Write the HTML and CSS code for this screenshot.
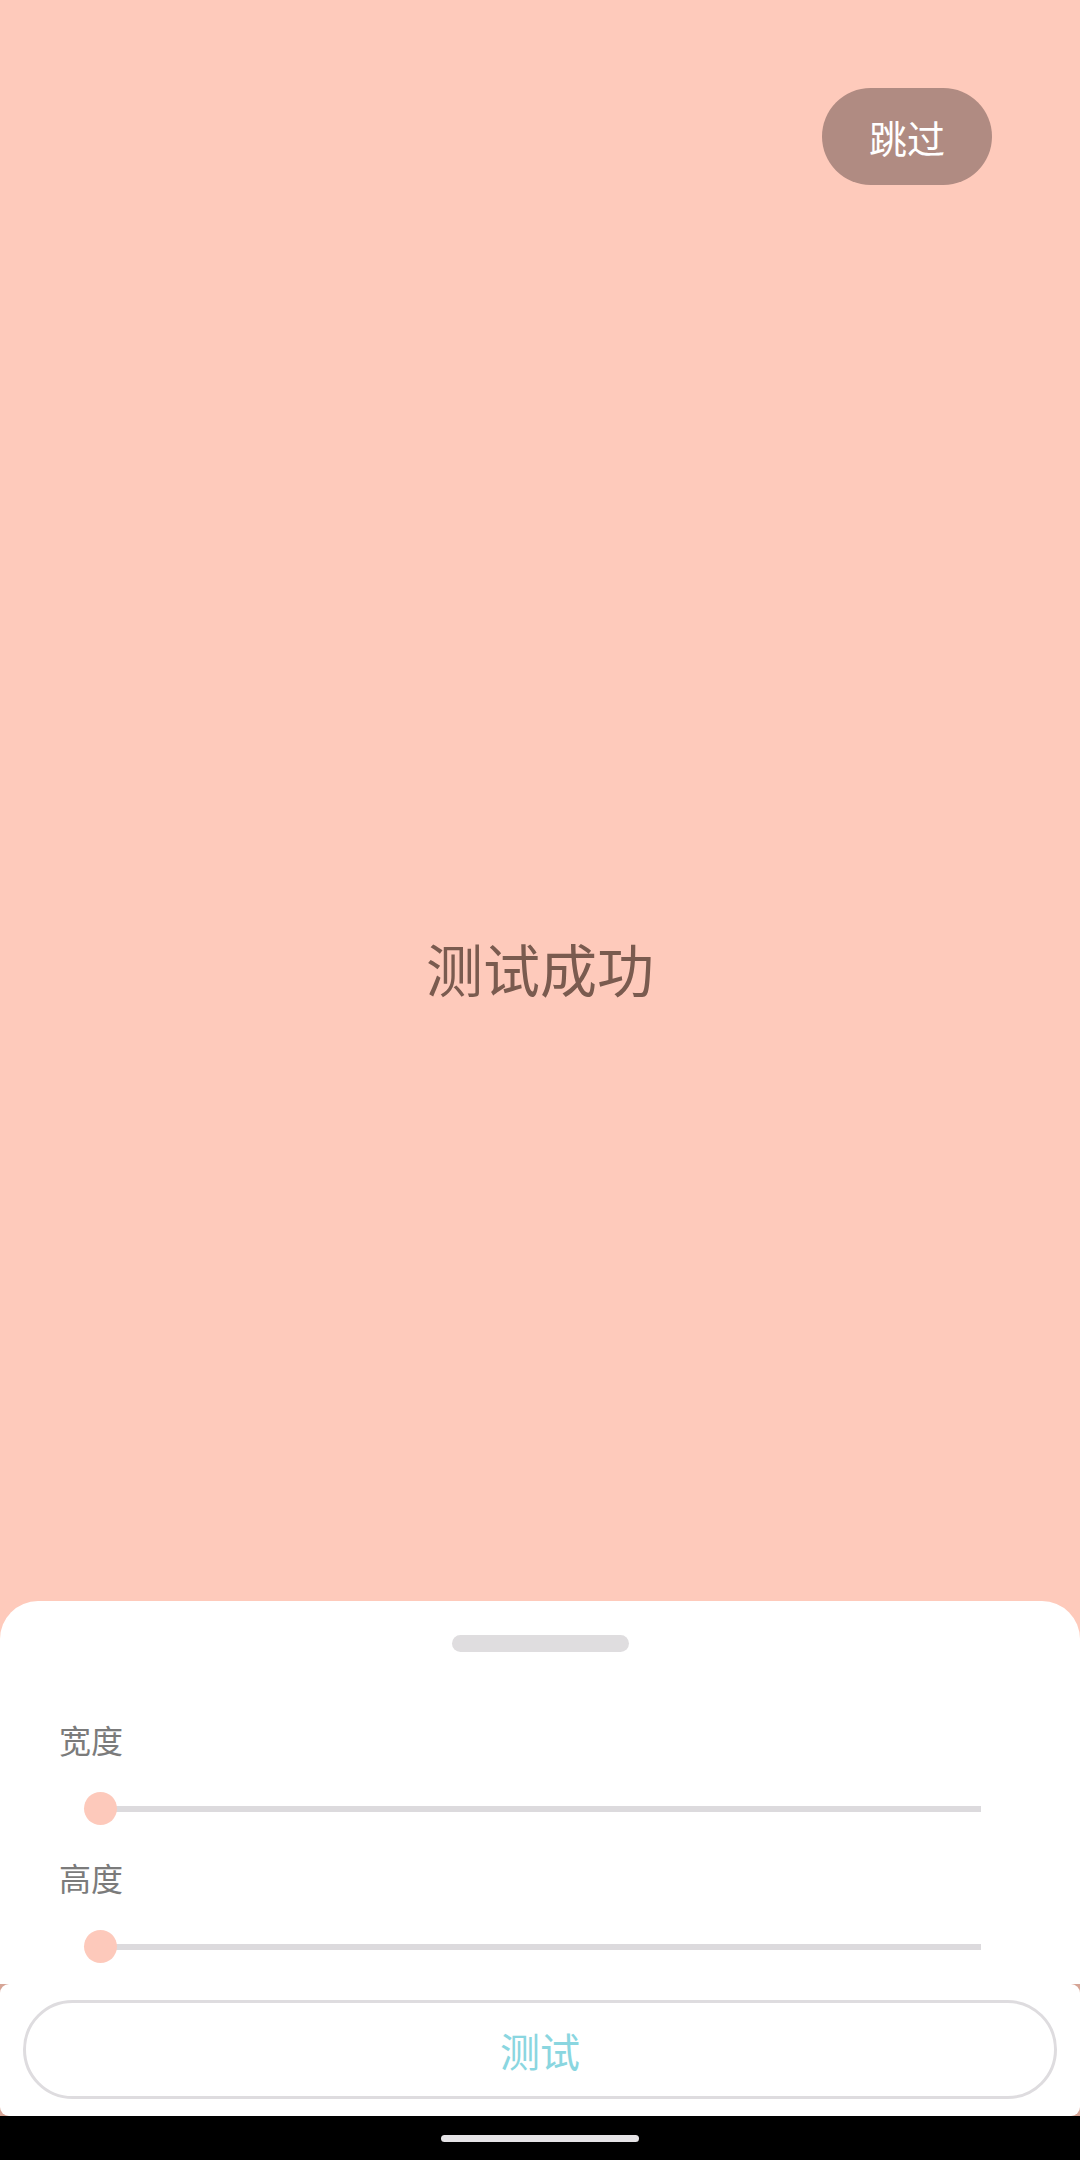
FILE: index.html
```html
<!DOCTYPE html>
<html lang="zh">
<head>
<meta charset="utf-8">
<title>测试</title>
<link rel="stylesheet" href="styles.css">
</head>
<body>
<div class="screen">
  <main class="main">
    <div class="header">
      <button class="skip">跳过</button>
    </div>
    <div class="title">测试成功</div>
  </main>
  <section class="sheet">
    <div class="handle"></div>
    <div class="label label-first">宽度</div>
    <div class="slider">
      <div class="track"></div>
      <div class="thumb"></div>
    </div>
    <div class="label">高度</div>
    <div class="slider">
      <div class="track"></div>
      <div class="thumb"></div>
    </div>
  </section>
  <div class="footer-wrap">
    <div class="footer">
      <button class="test-btn">测试</button>
    </div>
  </div>
  <div class="navbar">
    <div class="nav-handle"></div>
  </div>
</div>
</body>
</html>
```

FILE: styles.css
```css
html, body {
  margin: 0;
  padding: 0;
}
body {
  font-family: "Noto Sans CJK SC", "Noto Sans", sans-serif;
  background: #fecabb;
}
.screen {
  width: 1080px;
  height: 2160px;
  display: flex;
  flex-direction: column;
  background: #fecabb;
  overflow: hidden;
}
.main {
  height: 1601px;
  display: flex;
  flex-direction: column;
  flex-shrink: 0;
}
.header {
  display: flex;
  justify-content: flex-end;
  padding: 88px 88px 0 0;
}
.skip {
  width: 170px;
  height: 97px;
  border: none;
  border-radius: 49px;
  background: #b08b82;
  color: #ffffff;
  font-family: "Noto Sans CJK SC", sans-serif;
  font-size: 38px;
  line-height: 97px;
  padding: 0;
}
.title {
  margin-top: 742px;
  text-align: center;
  font-size: 57px;
  line-height: 80px;
  color: #7a5b4f;
}
.sheet {
  height: 383px;
  flex-shrink: 0;
  box-sizing: border-box;
  background: #ffffff;
  border-radius: 38px 38px 0 0;
  padding-top: 34px;
  display: flex;
  flex-direction: column;
}
.handle {
  width: 177px;
  height: 17px;
  border-radius: 9px;
  background: #dfdddf;
  align-self: center;
}
.label {
  margin: 24px 0 0 59px;
  font-size: 32px;
  line-height: 44px;
  color: #7b7b7b;
}
.label-first {
  margin-top: 65px;
}
.slider {
  position: relative;
  margin: 26px 0 0 84px;
  width: 897px;
  height: 44px;
  display: flex;
  align-items: center;
}
.track {
  margin-left: 16px;
  flex: 1;
  height: 6px;
  background: #dcdadd;
}
.thumb {
  position: absolute;
  left: 0;
  top: 5px;
  width: 33px;
  height: 33px;
  border-radius: 50%;
  background: #fdc9bb;
}
.footer-wrap {
  height: 132px;
  flex-shrink: 0;
  background: #d6a596;
}
.footer {
  height: 132px;
  box-sizing: border-box;
  background: #ffffff;
  border-radius: 9px;
  padding: 16px 23px 17px 23px;
}
.test-btn {
  width: 100%;
  height: 99px;
  box-sizing: border-box;
  border: 3px solid #dedcdf;
  border-radius: 50px;
  background: #ffffff;
  color: #8ad6e0;
  font-family: "Noto Sans CJK SC", sans-serif;
  font-size: 40px;
  padding: 0;
}
.navbar {
  flex: 1;
  background: #000000;
  display: flex;
  align-items: center;
  justify-content: center;
}
.nav-handle {
  width: 198px;
  height: 7px;
  border-radius: 4px;
  background: #e5e3e6;
}
```
